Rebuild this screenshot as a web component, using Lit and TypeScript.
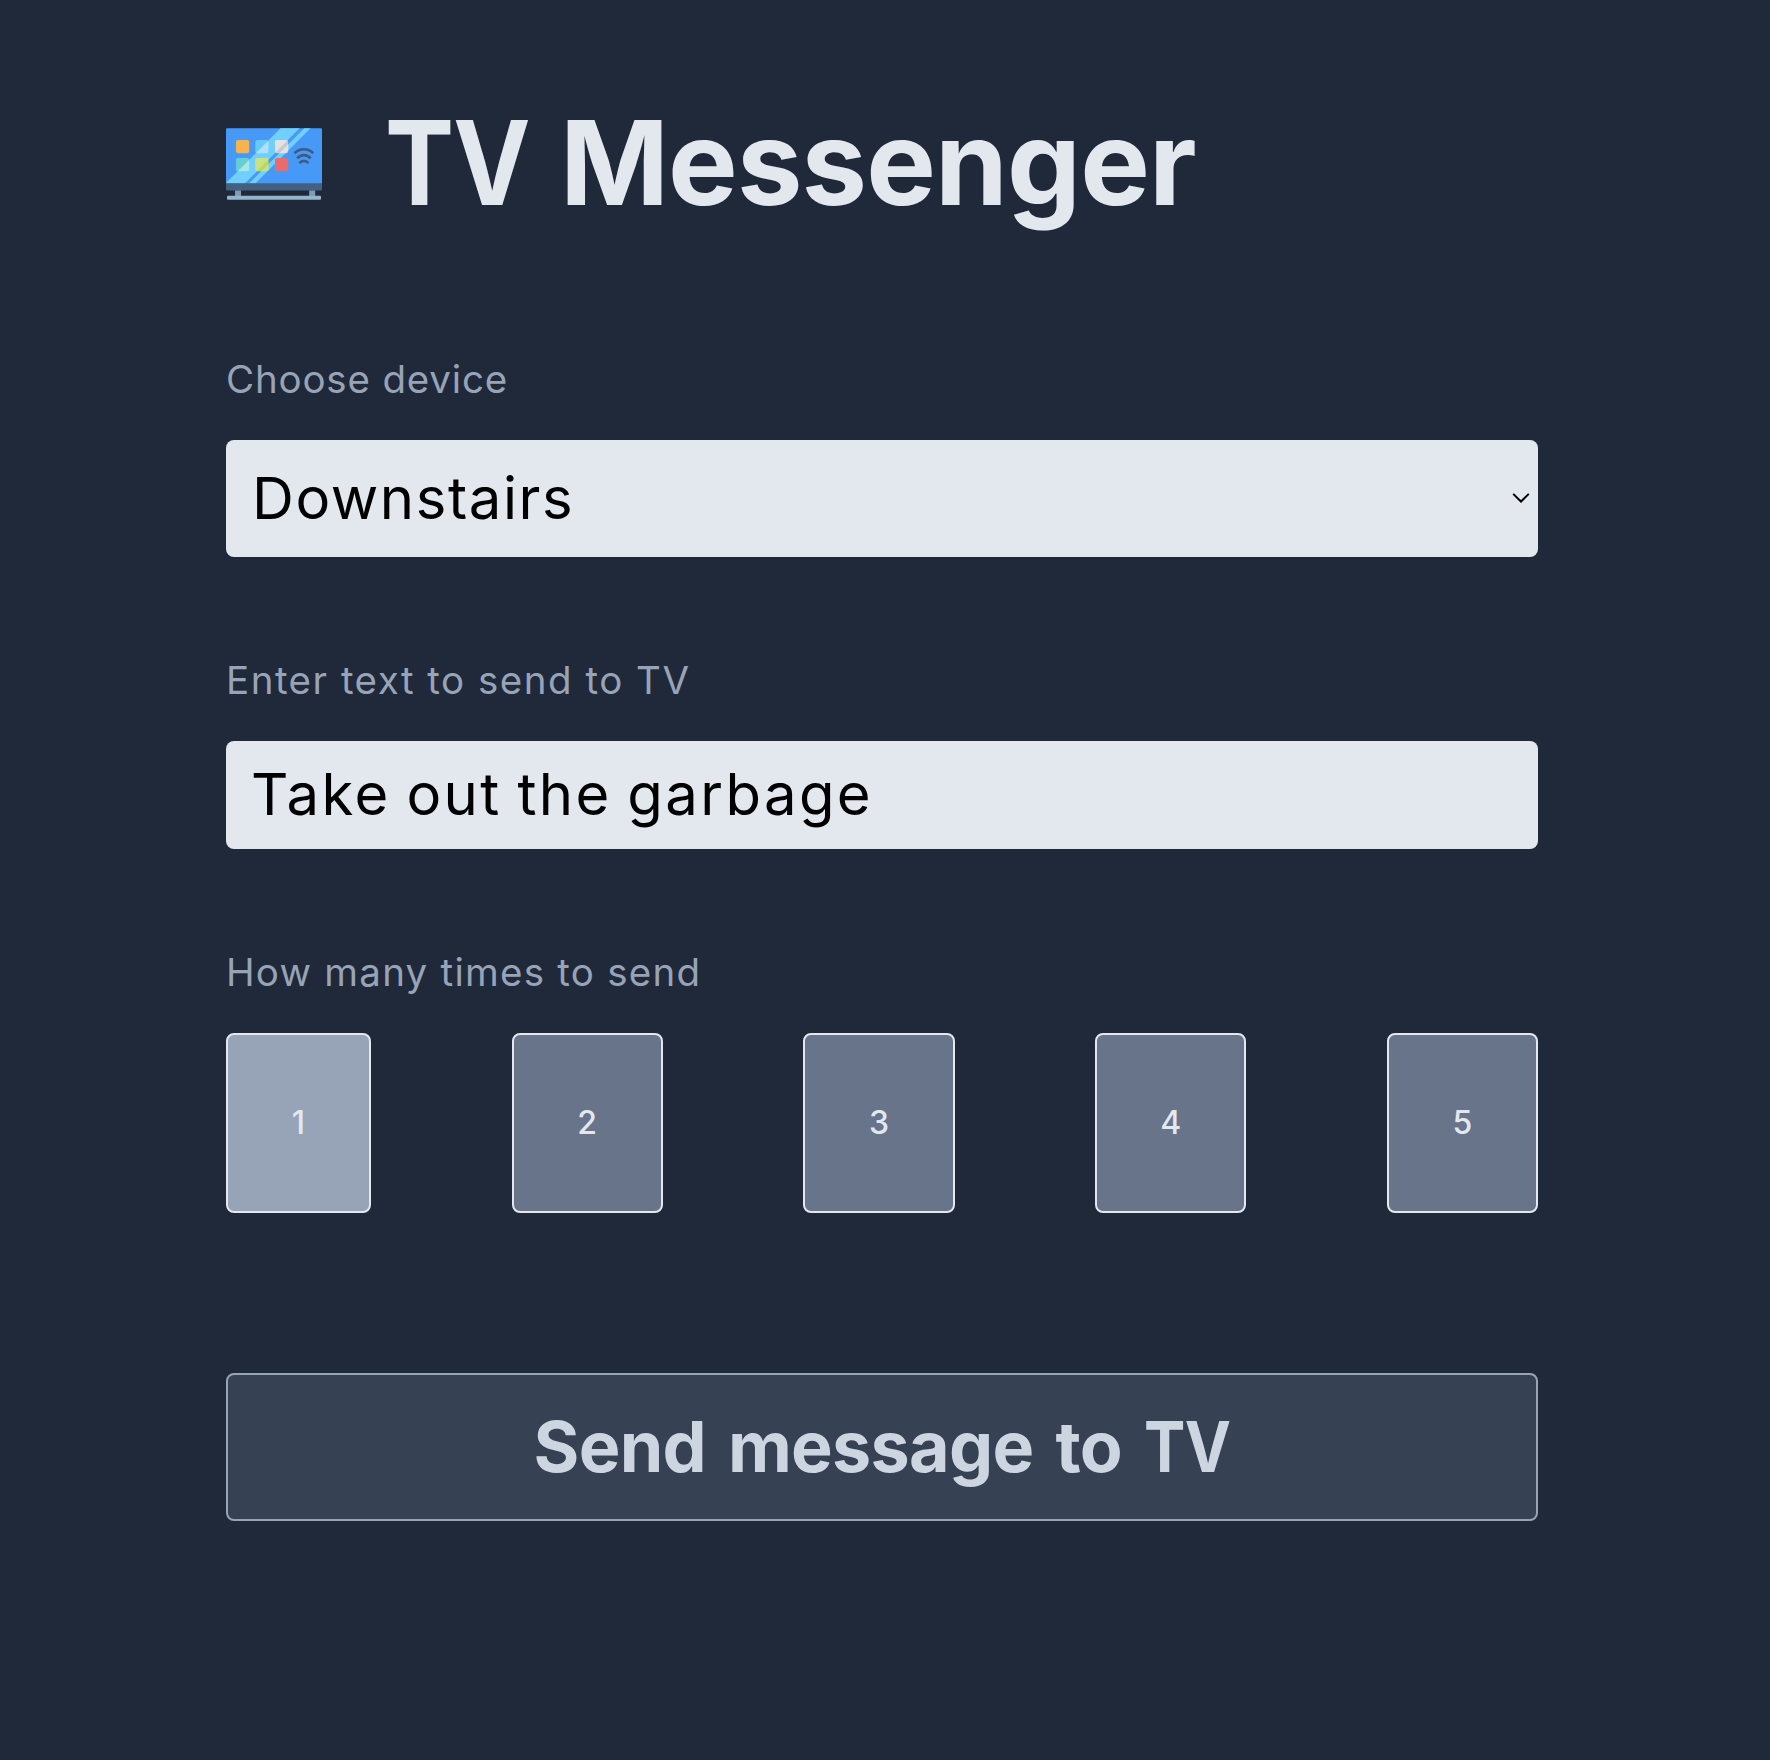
import { LitElement, html, css, svg } from "lit";
import { customElement, state } from "lit/decorators.js";
import { classMap } from "lit/directives/class-map.js";

const tiles = [
  { x: 10, y: 24, fill: "#f7b44a" },
  { x: 29.3, y: 24, fill: "#68c8f8" },
  { x: 49, y: 24, fill: "#c9c9cb" },
  { x: 10, y: 42, fill: "#62cfd2" },
  { x: 29.3, y: 42, fill: "#a9c474" },
  { x: 49, y: 42, fill: "#ea6c6a" },
];

@customElement("tv-icon")
class TvIcon extends LitElement {
  static styles = css`
    :host { display: block; width: 96px; height: 96px; }
    svg { display: block; }
  `;

  render() {
    return html`
      <svg width="96" height="96" viewBox="0 0 96 96" aria-hidden="true">
        <defs>
          <clipPath id="glare">
            <path d="M54.5 12.3H73.5L19 67.3H0.5V66.5ZM78.3 12.3H84.5L29.5 67.3H23.3Z" />
          </clipPath>
        </defs>
        <rect y="12.3" width="96" height="58" rx="1" fill="#4799f8" />
        <rect y="12" width="96" height="56" fill="#71d0fb" clip-path="url(#glare)" />
        ${tiles.map((t) => svg`<rect x=${t.x} y=${t.y} width="13.2" height="13.2" rx="2" fill=${t.fill} />`)}
        <g clip-path="url(#glare)">
          ${tiles.slice(1, 5).map((t) => svg`<rect x=${t.x} y=${t.y} width="13.2" height="13.2" rx="2" fill="#ffffff" fill-opacity="0.46" />`)}
        </g>
        <rect x="29.3" y="42" width="13.2" height="13.2" rx="2" fill="#c6e35c" fill-opacity="0.6" />
        <g fill="none" stroke="#3f5c80" stroke-width="2.7">
          <path d="M68.6 37.2C73.6 31.9 82.2 31.9 87.2 37.2" />
          <path d="M71.2 42.3C74.8 38 81 38 84.6 42.3" />
          <path d="M73.4 47.2C75.8 44 80 44 82.4 47.2" />
        </g>
        <path d="M0 67.3H96V73.4Q96 74.4 95 74.4H1Q0 74.4 0 73.4Z" fill="#42607f" />
        <path d="M9 74.4H15V80H9ZM83.2 74.4H89.2V80H83.2Z" fill="#7c9db5" />
        <rect x="1" y="79.8" width="94" height="4" rx="1" fill="#93b4ca" />
      </svg>
    `;
  }
}

@customElement("app-root")
class AppRoot extends LitElement {
  static styles = css`
    :host {
      display: block;
      box-sizing: border-box;
      min-height: 1760px;
      padding: 103px 232px 0 226px;
      background: #20293a;
      color: #e3e7ee;
      font-family: Inter, "Liberation Sans", sans-serif;
    }
    * { box-sizing: border-box; }
    .header { display: flex; align-items: flex-start; gap: 63px; height: 119px; margin-bottom: 129px; }
    .logo { margin-top: 13px; }
    .title {
      margin: 0;
      font-size: 117px;
      font-weight: 700;
      line-height: 119px;
      letter-spacing: -0.85px;
      word-spacing: -15.7px;
      white-space: nowrap;
    }
    .narrow { display: inline-block; transform: scaleX(0.885); transform-origin: left center; }
    .field { display: flex; flex-direction: column; margin-bottom: 94px; }
    .label {
      height: 56px;
      line-height: 56px;
      font-size: 38.5px;
      color: #97a3b6;
      letter-spacing: 0.82px;
      margin-bottom: 33px;
    }
    .message-label { height: 58px; line-height: 58px; letter-spacing: 1.5px; margin-bottom: 32px; }
    .times-label { height: 57px; line-height: 57px; letter-spacing: 1.25px; margin-bottom: 32px; }
    .select-wrap { display: grid; align-items: center; }
    .select-wrap > * { grid-area: 1 / 1; }
    .select, .input {
      width: 100%;
      margin: 0;
      border: 0;
      border-radius: 8px;
      outline: 0;
      background: #e3e7ee;
      color: #000;
      font-family: inherit;
      font-size: 58px;
      font-weight: 400;
    }
    .select { appearance: none; height: 117px; padding: 0 26px 2px; letter-spacing: 1.6px; }
    .chevron { justify-self: end; margin: 0 8px 1px 0; pointer-events: none; }
    .input { height: 108px; padding: 0 25px 3px; letter-spacing: 2.4px; word-spacing: -3px; }
    .input-field { margin-bottom: 95px; }
    .times { display: flex; justify-content: space-between; }
    .times-field { margin-bottom: 160px; }
    .count {
      width: 151.2px;
      height: 180px;
      padding: 0 0 1px;
      border: 2px solid #e3e7ee;
      border-radius: 8px;
      background: #68748a;
      color: #e3e7ee;
      font-family: inherit;
      font-size: 32px;
      font-weight: 500;
    }
    .count.selected { width: 145px; background: #97a3b6; }
    .send {
      display: block;
      width: 100%;
      height: 148px;
      padding: 0 0 2px;
      border: 2px solid #97a3b6;
      border-radius: 8px;
      background: #364153;
      color: #cdd5e1;
      font-family: inherit;
      font-size: 70px;
      font-weight: 700;
      letter-spacing: -0.7px;
      word-spacing: 6px;
    }
    .send .narrow { margin-right: -11px; }
  `;

  @state() private times = 1;

  render() {
    return html`
      <header class="header">
        <tv-icon class="logo"></tv-icon>
        <h1 class="title"><span class="narrow">TV</span> Messenger</h1>
      </header>
      <div class="field">
        <label class="label" for="device">Choose device</label>
        <div class="select-wrap">
          <select class="select" id="device">
            <option>Downstairs</option>
          </select>
          <svg class="chevron" width="18" height="12" viewBox="0 0 18 12" fill="none" stroke="#000" stroke-width="2">
            <path d="M1.2 1.9L9 9.5L16.8 1.9" />
          </svg>
        </div>
      </div>
      <div class="field input-field">
        <label class="label message-label" for="message">Enter text to send to TV</label>
        <input class="input" id="message" type="text" value="Take out the garbage" />
      </div>
      <div class="field times-field">
        <div class="label times-label">How many times to send</div>
        <div class="times">
          ${[1, 2, 3, 4, 5].map(
            (n) => html`<button
              class=${classMap({ count: true, selected: n === this.times })}
              @click=${() => (this.times = n)}
            >${n}</button>`,
          )}
        </div>
      </div>
      <button class="send">Send message to <span class="narrow">TV</span></button>
    `;
  }
}
